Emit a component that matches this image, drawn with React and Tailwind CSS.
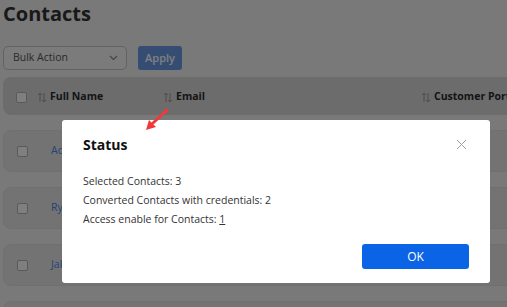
import React from "react";

function SortIcon() {
  return (
    <svg width="10" height="11" viewBox="0 0 10 11" className="shrink-0">
      <path d="M3 10V1M1 3l2-2 2 2" stroke="#9a9a9a" strokeWidth="1" fill="none" />
      <path d="M7 1v9M5 8l2 2 2-2" stroke="#9a9a9a" strokeWidth="1" fill="none" />
    </svg>
  );
}

function Checkbox() {
  return <div className="w-[11px] h-[11px] rounded-[2px] border border-[#b5b5b5] bg-white shrink-0" />;
}

function Row({ name }) {
  return (
    <div className="h-[42px] rounded-[8px] bg-[#e6e6e6] border border-[#e0e0e0] flex items-center pl-[13px] w-[620px]">
      <Checkbox />
      <span className="ml-[23px] text-[10.5px] text-[#4a86ec]">{name}</span>
    </div>
  );
}

export default function App() {
  return (
    <div
      className="relative w-[507px] h-[307px] overflow-hidden bg-[#f2f2f2]"
      style={{ fontFamily: '"Open Sans", "Noto Sans", sans-serif' }}
    >
      <div className="pl-[3px]">
        <h1 className="text-[20px] font-bold leading-[30px] text-[#333] -mt-[1px]">Contacts</h1>
        <div className="flex items-center gap-[11px] mt-[17px]">
          <div className="w-[124px] h-[24px] rounded-[5px] border border-[#c4c4c4] bg-[#f6f6f6] flex items-center justify-between pl-[9px] pr-[8px]">
            <span className="text-[10.5px] text-[#555]">Bulk Action</span>
            <svg width="9" height="6" viewBox="0 0 9 6">
              <path d="M1 1l3.5 3.5L8 1" stroke="#8a8a8a" strokeWidth="1.2" fill="none" />
            </svg>
          </div>
          <div className="w-[44px] h-[24px] rounded-[3px] bg-[#6b9be6] flex items-center justify-center">
            <span className="text-[11px] font-semibold text-white">Apply</span>
          </div>
        </div>
        <div className="mt-[7px] h-[38px] w-[620px] rounded-[8px] bg-[#d8d8d8] flex items-center pl-[13px] pt-[2px] text-[10.5px] font-bold text-[#2a2a2a]">
          <Checkbox />
          <div className="ml-[10px] flex items-center gap-[3px] w-[126px]">
            <SortIcon />
            <span>Full Name</span>
          </div>
          <div className="flex items-center gap-[3px] w-[258px]">
            <SortIcon />
            <span>Email</span>
          </div>
          <div className="flex items-center gap-[3px]">
            <SortIcon />
            <span>Customer Portal</span>
          </div>
        </div>
        <div className="mt-[15px] flex flex-col gap-[15px]">
          <Row name="Adam Smith" />
          <Row name="Ryan Jones" />
          <Row name="Jake Miller" />
          <Row name="Lisa Brown" />
        </div>
      </div>

      <div className="absolute inset-0 bg-black/50" />

      <div className="absolute left-[62px] top-[120px] w-[428px] h-[163px] bg-white rounded-[3px] flex flex-col pl-[21px] pr-[21px] pt-[14px]">
        <div className="flex items-center justify-between h-[20px]">
          <span className="text-[14px] font-bold text-[#111]">Status</span>
          <svg width="11" height="11" viewBox="0 0 11 11" className="mr-[2px]">
            <path d="M1 1l9 9M10 1l-9 9" stroke="#a0a0a0" strokeWidth="1" />
          </svg>
        </div>
        <div className="mt-[18px] text-[10.5px] leading-[19px] text-[#333]">
          <div>Selected Contacts: 3</div>
          <div>Converted Contacts with credentials: 2</div>
          <div>
            Access enable for Contacts: <span className="underline">1</span>
          </div>
        </div>
        <div className="mt-auto mb-[14px] flex justify-end">
          <div className="w-[107px] h-[25px] rounded-[3px] bg-[#0b63e5] flex items-center justify-center text-[12px] text-white">
            OK
          </div>
        </div>
      </div>

      <svg className="absolute left-0 top-0" width="507" height="307" viewBox="0 0 507 307" style={{ pointerEvents: "none" }}>
        <path d="M167 110L153 123" stroke="#f0393a" strokeWidth="3" strokeLinecap="round" />
        <path d="M146 130l3-10 7 7z" fill="#f0393a" />
      </svg>
    </div>
  );
}
